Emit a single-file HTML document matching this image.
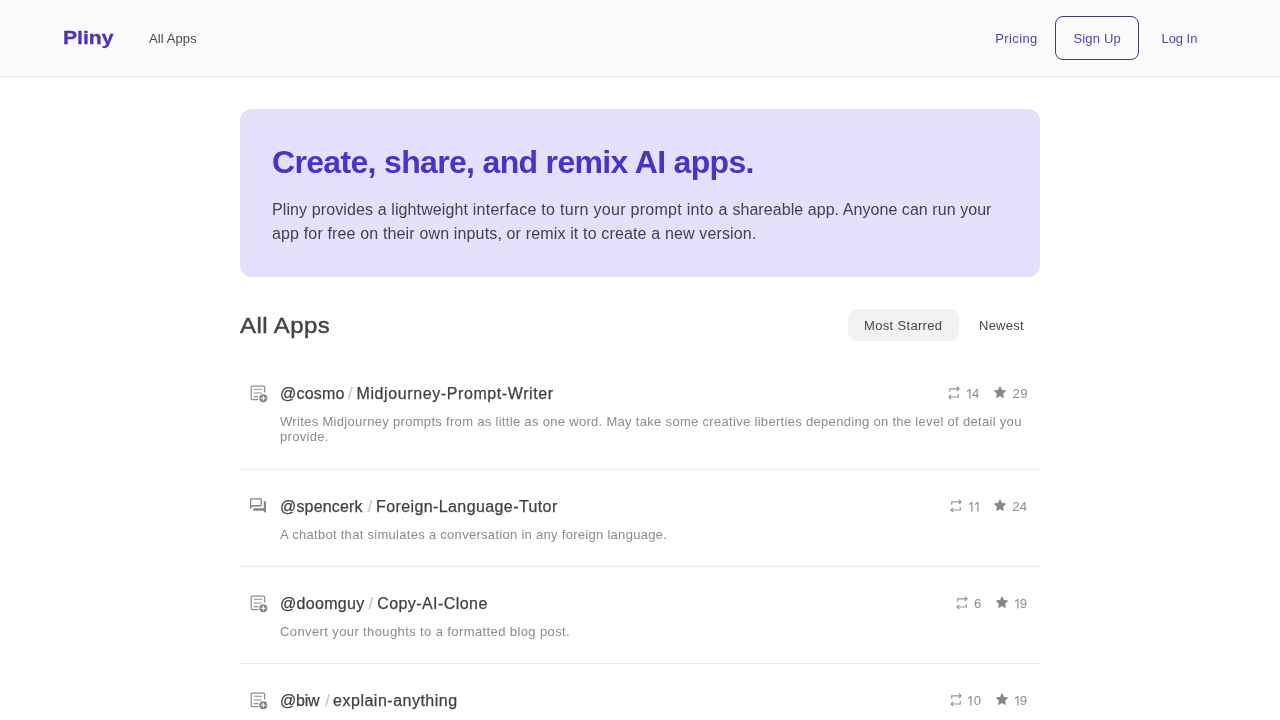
<!DOCTYPE html>
<html><head><meta charset="utf-8">
<style>
*{box-sizing:border-box;margin:0;padding:0}
html,body{width:1280px;height:720px;overflow:hidden;background:#fff;font-family:"Liberation Sans",sans-serif;}
#root{position:absolute;left:0;top:0;width:1280px;height:720px;will-change:transform;transform:translateZ(0)}
.nav{position:absolute;left:0;top:0;width:1280px;height:77px;background:#fafafa;border-bottom:1px solid #e6e6e6}
.logo{position:absolute;left:62.5px;top:24.7px;font-size:18.6px;font-weight:bold;color:#5130b8;-webkit-text-stroke:0.3px #5130b8;line-height:26px;transform:scaleX(1.135);transform-origin:0 0;white-space:nowrap}
.nl{position:absolute;top:31px;font-size:13px;line-height:16px;color:#46464d;white-space:nowrap}
.pl{color:#5545ab}
.signup{position:absolute;left:1055px;top:16px;width:84px;height:44px;border:1px solid #433977;border-radius:8px}
.hero{position:absolute;left:240px;top:109px;width:800px;height:168px;background:#e5e0fd;border-radius:12px}
.hero h1{position:absolute;left:32px;top:34px;font-size:32px;line-height:38px;font-weight:bold;color:#4d31c8;white-space:nowrap;letter-spacing:-0.67px}
.hero p{position:absolute;left:32px;top:89px;font-size:16px;line-height:24px;color:#413f54;white-space:nowrap;letter-spacing:0.15px}
.h2{position:absolute;left:240px;top:311px;font-size:22px;line-height:30px;color:#44444b;white-space:nowrap;letter-spacing:0.4px;-webkit-text-stroke:0.45px #44444b;transform:scaleX(1.09);transform-origin:0 0}
.pill{position:absolute;left:848px;top:309px;width:110.5px;height:32px;background:#f2f2f3;border-radius:9px}
.tab{position:absolute;top:318px;font-size:13px;line-height:16px;color:#46464d;white-space:nowrap}
.row{position:absolute;left:240px;width:800px}
.title{position:absolute;left:40px;top:1px;font-size:16px;line-height:22px;color:#3f3f46;-webkit-text-stroke:0.25px;white-space:nowrap;letter-spacing:0.25px}
.title i{font-style:normal;color:#c8c8cc}
.desc{position:absolute;left:40px;font-size:13px;line-height:16px;color:#8b8b90;white-space:nowrap;letter-spacing:0.3px}
.sep{position:absolute;left:240px;width:800px;height:1px;background:#e9e9ea}
.n{position:absolute;font-size:13.2px;line-height:16px;color:#8e8e92;white-space:nowrap;letter-spacing:0.4px}
.ico{position:absolute;overflow:visible}
</style></head><body><div id="root">
<div class="nav">
 <div class="logo">Pliny</div>
 <div class="nl" style="left:149px;letter-spacing:0.1px">All Apps</div>
 <div class="nl pl" style="left:995.2px;letter-spacing:0.4px">Pricing</div>
 <div class="signup"></div>
 <div class="nl pl" style="left:1073.5px;letter-spacing:0.15px">Sign Up</div>
 <div class="nl pl" style="left:1161.5px;letter-spacing:-0.05px">Log In</div>
</div>
<div class="hero">
 <h1>Create, share, and remix AI apps.</h1>
 <p><span style="letter-spacing:0.11px">Pliny provides a lightweight </span><span style="letter-spacing:0.29px">interface to turn your prompt into a </span><span style="letter-spacing:0.06px">shareable app. Anyone can run your</span><br>app for free on their own inputs, or remix it to create a new version.</p>
</div>
<div class="h2">All Apps</div>
<div class="pill"></div>
<div class="tab" style="left:864px;letter-spacing:0.33px">Most Starred</div>
<div class="tab" style="left:979px;letter-spacing:0.25px">Newest</div>



<div class="row" style="top:382px">
 <div class="title" style="letter-spacing:0.2px">@cosmo</div><div class="title" style="left:108px;color:#c8c8cc">/</div><div class="title" style="left:116.5px;letter-spacing:0.6px">Midjourney-Prompt-Writer</div>
 <div class="desc" style="top:31.6px;letter-spacing:0.31px;line-height:15.5px">Writes Midjourney prompts from as little as one word. May take some creative liberties depending on the level of detail you<br>provide.</div>
</div>
<svg class="ico" style="left:249px;top:384px" width="20" height="20"><g><path d="M15.6 8.5V3.3Q15.6 2.2 14.5 2.2H3.3Q2.2 2.2 2.2 3.3V14.5Q2.2 15.6 3.3 15.6H9.3" fill="none" stroke="#8e8e8e" stroke-width="1.2"/><path d="M4.75 5.25H13.1M4.75 9H12.7M4.75 12.6H9.3" fill="none" stroke="#8e8e8e" stroke-width="1.2"/><circle cx="14.3" cy="14.2" r="3.95" fill="#858585"/><path d="M14.3 11.8V16.6M11.9 14.2H16.7" stroke="#fff" stroke-width="1.1" fill="none"/></g></svg>
<svg class="ico" style="left:948px;top:384px" width="14" height="18"><g fill="none" stroke="#969696" stroke-width="1.2"><path d="M1.7 7.8V4.8H10.8M8.9 2.6L11.1 4.8L8.9 7"/><path d="M10.3 10V13H1.2M3.1 10.8L0.9 13L3.1 15.2"/></g></svg>
<svg class="ico" style="left:966.90px;top:388.65px" width="4" height="10"><path fill="#8e8e92" d="M3.5 0V9.4H2.3V1.4L0 2.95V1.7L2.5 0Z"/></svg><div class="n" style="left:972.1px;top:385.5px">4</div>
<svg class="ico" style="left:992.8px;top:385.3px" width="14" height="14"><path fill="#868686" transform="scale(0.7)" d="M10.868 2.884c-.321-.772-1.415-.772-1.736 0l-1.83 4.401-4.753.381c-.833.067-1.171 1.107-.536 1.651l3.62 3.102-1.106 4.637c-.194.813.691 1.456 1.405 1.02L10 15.591l4.069 2.485c.713.436 1.598-.207 1.404-1.02l-1.106-4.637 3.62-3.102c.635-.544.297-1.584-.536-1.65l-4.752-.382-1.831-4.401z"/></svg>
<div class="n" style="left:1012.5px;top:385.5px">29</div>

<div class="sep" style="top:469px"></div>
<div class="row" style="top:495px">
 <div class="title" style="letter-spacing:0.18px">@spencerk</div><div class="title" style="left:127.80000000000001px;color:#c8c8cc">/</div><div class="title" style="left:136px;letter-spacing:0.4px">Foreign-Language-Tutor</div>
 <div class="desc" style="top:31.6px;letter-spacing:0.29px">A chatbot that simulates a conversation in any foreign language.</div>
</div>
<svg class="ico" style="left:248px;top:496px" width="20" height="20"><path d="M2.65 11.7V3.25Q2.65 2.85 3.05 2.85H12.85Q13.25 2.85 13.25 3.25V9.35Q13.25 9.75 12.85 9.75H4.6Z" fill="none" stroke="#858585" stroke-width="1.3" stroke-linejoin="miter"/><path fill="#858585" d="M15.75 5.25H17.6Q18 5.25 18 5.65V17.3L15.4 14.75H5.65Q5.25 14.75 5.25 14.35V12.25H15.75Z"/></svg>
<svg class="ico" style="left:950.2px;top:497px" width="14" height="18"><g fill="none" stroke="#969696" stroke-width="1.2"><path d="M1.7 7.8V4.8H10.8M8.9 2.6L11.1 4.8L8.9 7"/><path d="M10.3 10V13H1.2M3.1 10.8L0.9 13L3.1 15.2"/></g></svg>
<svg class="ico" style="left:968.85px;top:501.65px" width="4" height="10"><path fill="#8e8e92" d="M3.5 0V9.4H2.3V1.4L0 2.95V1.7L2.5 0Z"/></svg><svg class="ico" style="left:974.80px;top:501.65px" width="4" height="10"><path fill="#8e8e92" d="M3.5 0V9.4H2.3V1.4L0 2.95V1.7L2.5 0Z"/></svg>
<svg class="ico" style="left:992.8px;top:498.3px" width="14" height="14"><path fill="#868686" transform="scale(0.7)" d="M10.868 2.884c-.321-.772-1.415-.772-1.736 0l-1.83 4.401-4.753.381c-.833.067-1.171 1.107-.536 1.651l3.62 3.102-1.106 4.637c-.194.813.691 1.456 1.405 1.02L10 15.591l4.069 2.485c.713.436 1.598-.207 1.404-1.02l-1.106-4.637 3.62-3.102c.635-.544.297-1.584-.536-1.65l-4.752-.382-1.831-4.401z"/></svg>
<div class="n" style="left:1012.2px;top:498.5px;letter-spacing:0.25px">24</div>

<div class="sep" style="top:566px"></div>
<div class="row" style="top:592px">
 <div class="title" style="letter-spacing:0.31px">@doomguy</div><div class="title" style="left:128.8px;color:#c8c8cc">/</div><div class="title" style="left:137.2px;letter-spacing:0.43px">Copy-AI-Clone</div>
 <div class="desc" style="top:31.6px;letter-spacing:0.39px">Convert your thoughts to a formatted blog post.</div>
</div>
<svg class="ico" style="left:249px;top:594px" width="20" height="20"><g><path d="M15.6 8.5V3.3Q15.6 2.2 14.5 2.2H3.3Q2.2 2.2 2.2 3.3V14.5Q2.2 15.6 3.3 15.6H9.3" fill="none" stroke="#8e8e8e" stroke-width="1.2"/><path d="M4.75 5.25H13.1M4.75 9H12.7M4.75 12.6H9.3" fill="none" stroke="#8e8e8e" stroke-width="1.2"/><circle cx="14.3" cy="14.2" r="3.95" fill="#858585"/><path d="M14.3 11.8V16.6M11.9 14.2H16.7" stroke="#fff" stroke-width="1.1" fill="none"/></g></svg>
<svg class="ico" style="left:956px;top:594px" width="14" height="18"><g fill="none" stroke="#969696" stroke-width="1.2"><path d="M1.7 7.8V4.8H10.8M8.9 2.6L11.1 4.8L8.9 7"/><path d="M10.3 10V13H1.2M3.1 10.8L0.9 13L3.1 15.2"/></g></svg>
<div class="n" style="left:974px;top:595.5px">6</div>
<svg class="ico" style="left:994.8px;top:595.3px" width="14" height="14"><path fill="#868686" transform="scale(0.7)" d="M10.868 2.884c-.321-.772-1.415-.772-1.736 0l-1.83 4.401-4.753.381c-.833.067-1.171 1.107-.536 1.651l3.62 3.102-1.106 4.637c-.194.813.691 1.456 1.405 1.02L10 15.591l4.069 2.485c.713.436 1.598-.207 1.404-1.02l-1.106-4.637 3.62-3.102c.635-.544.297-1.584-.536-1.65l-4.752-.382-1.831-4.401z"/></svg>
<svg class="ico" style="left:1014.50px;top:598.65px" width="4" height="10"><path fill="#8e8e92" d="M3.5 0V9.4H2.3V1.4L0 2.95V1.7L2.5 0Z"/></svg><div class="n" style="left:1019.8px;top:595.5px">9</div>

<div class="sep" style="top:663px"></div>
<div class="row" style="top:689px">
 <div class="title" style="letter-spacing:-0.2px">@biw</div><div class="title" style="left:85.19999999999999px;color:#c8c8cc">/</div><div class="title" style="left:93.10000000000002px;letter-spacing:0.5px">explain-anything</div>
</div>
<svg class="ico" style="left:249px;top:691px" width="20" height="20"><g><path d="M15.6 8.5V3.3Q15.6 2.2 14.5 2.2H3.3Q2.2 2.2 2.2 3.3V14.5Q2.2 15.6 3.3 15.6H9.3" fill="none" stroke="#8e8e8e" stroke-width="1.2"/><path d="M4.75 5.25H13.1M4.75 9H12.7M4.75 12.6H9.3" fill="none" stroke="#8e8e8e" stroke-width="1.2"/><circle cx="14.3" cy="14.2" r="3.95" fill="#858585"/><path d="M14.3 11.8V16.6M11.9 14.2H16.7" stroke="#fff" stroke-width="1.1" fill="none"/></g></svg>
<svg class="ico" style="left:950.2px;top:691px" width="14" height="18"><g fill="none" stroke="#969696" stroke-width="1.2"><path d="M1.7 7.8V4.8H10.8M8.9 2.6L11.1 4.8L8.9 7"/><path d="M10.3 10V13H1.2M3.1 10.8L0.9 13L3.1 15.2"/></g></svg>
<svg class="ico" style="left:968.40px;top:695.65px" width="4" height="10"><path fill="#8e8e92" d="M3.5 0V9.4H2.3V1.4L0 2.95V1.7L2.5 0Z"/></svg><div class="n" style="left:973.8px;top:692.5px">0</div>
<svg class="ico" style="left:994.8px;top:692.3px" width="14" height="14"><path fill="#868686" transform="scale(0.7)" d="M10.868 2.884c-.321-.772-1.415-.772-1.736 0l-1.83 4.401-4.753.381c-.833.067-1.171 1.107-.536 1.651l3.62 3.102-1.106 4.637c-.194.813.691 1.456 1.405 1.02L10 15.591l4.069 2.485c.713.436 1.598-.207 1.404-1.02l-1.106-4.637 3.62-3.102c.635-.544.297-1.584-.536-1.65l-4.752-.382-1.831-4.401z"/></svg>
<svg class="ico" style="left:1014.50px;top:695.65px" width="4" height="10"><path fill="#8e8e92" d="M3.5 0V9.4H2.3V1.4L0 2.95V1.7L2.5 0Z"/></svg><div class="n" style="left:1019.8px;top:692.5px">9</div>
</div></body></html>
